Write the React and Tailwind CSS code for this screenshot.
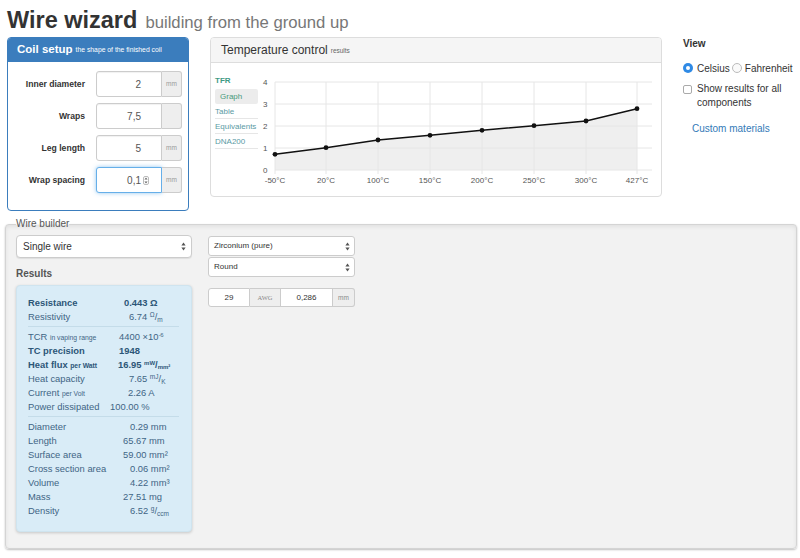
import React from "react"

const UpDown = ({ className = "" }) => (
  <svg width="5" height="9" viewBox="0 0 5 9" className={className}>
    <path d="M2.5 0.5 L4.6 3.4 L0.4 3.4 Z" fill="#555" />
    <path d="M2.5 8.5 L4.6 5.6 L0.4 5.6 Z" fill="#555" />
  </svg>
)

function CoilRow({ label, value, unit, focused }) {
  return (
    <div className="flex items-center h-[26px]">
      <div className="w-[77px] text-right text-[8.6px] font-bold text-[#333]">{label}</div>
      <div className="ml-[11px] flex h-full">
        {focused ? (
          <div className="w-[66px] h-full bg-white border border-[#66afe9] rounded-l-[3px] shadow-[0_0_4px_rgba(102,175,233,0.7)] flex items-center justify-end pr-[12px] text-[10px] text-[#555]">
            <span>{value}</span>
            <span className="ml-[2px] flex items-center justify-center w-[6px] h-[9px] border border-[#bbb] rounded-[2px]">
              <svg width="4" height="7" viewBox="0 0 4 7">
                <path d="M2 0.5 L3.6 2.6 L0.4 2.6 Z" fill="#666" />
                <path d="M2 6.5 L3.6 4.4 L0.4 4.4 Z" fill="#666" />
              </svg>
            </span>
          </div>
        ) : (
          <div className="w-[66px] h-full bg-white border border-[#ccc] rounded-l-[3px] shadow-[inset_0_1px_1px_rgba(0,0,0,0.06)] flex items-center justify-end pr-[20px] text-[10px] text-[#555]">
            {value}
          </div>
        )}
        <div className="w-[20px] h-full bg-[#eee] border border-l-0 border-[#ccc] rounded-r-[3px] flex items-center justify-center text-[6.5px] text-[#999]">
          {unit}
        </div>
      </div>
    </div>
  )
}

function ChartGraph() {
  const xs = [17, 68, 120, 172, 224, 276, 328, 379]
  const xLabels = ["-50°C", "20°C", "100°C", "150°C", "200°C", "250°C", "300°C", "427°C"]
  const ys = [19, 41, 63, 85, 107]
  const data = [91.3, 84.7, 77, 72.3, 67.3, 62.7, 58, 45.7]
  const pts = xs.map((x, i) => `${x},${data[i]}`).join(" ")
  return (
    <svg width="402" height="133" viewBox="0 0 402 133" className="block">
      <polygon points={`${pts} 379,107 17,107`} fill="#efefef" />
      {ys.map((y) => (
        <line key={y} x1="17" x2="394" y1={y} y2={y} stroke="#e6e6e6" strokeWidth="1" />
      ))}
      {xs.map((x) => (
        <line key={x} x1={x} x2={x} y1="19" y2="111" stroke="#e6e6e6" strokeWidth="1" />
      ))}
      {["4", "3", "2", "1", "0"].map((t, i) => (
        <text key={t} x="5" y={ys[i] + 3} fontSize="8" fill="#555" fontFamily="Liberation Sans, Arial, sans-serif">
          {t}
        </text>
      ))}
      {xLabels.map((t, i) => (
        <text key={t} x={xs[i]} y="120" fontSize="8" fill="#555" textAnchor="middle" fontFamily="Liberation Sans, Arial, sans-serif">
          {t}
        </text>
      ))}
      <polyline points={pts} fill="none" stroke="#111" strokeWidth="1.5" />
      {xs.map((x, i) => (
        <circle key={x} cx={x} cy={data[i]} r="2.4" fill="#111" />
      ))}
    </svg>
  )
}

const Row = ({ label, children, ml, bold }) => (
  <div className={`flex h-[14px] items-center ${bold ? "font-bold text-[#2c5677]" : "text-[#3f6585]"}`}>
    <div className="w-[82px] whitespace-nowrap">{label}</div>
    <div className={`${ml} whitespace-nowrap`}>{children}</div>
  </div>
)

const Sep = () => <div className="mt-[2px] mb-[3px] h-px bg-[#c4dce9] mr-[2px]" />

function Results() {
  return (
    <div className="w-[176px] h-[247px] mt-[5px] bg-[#d9ecf7] border border-[#cfe4ef] rounded-[4px] shadow-[0_1px_3px_rgba(0,0,0,0.18)] pt-[10px] pl-[11px] pr-[10px] text-[9.4px]">
      <Row label="Resistance" ml="ml-[14px]" bold>0.443 Ω</Row>
      <Row label="Resistivity" ml="ml-[19px]">
        6.74 <sup className="text-[6.5px]">Ω</sup>/<sub className="text-[6.5px]">m</sub>
      </Row>
      <Sep />
      <Row label={<span>TCR <span className="text-[6.8px]">in vaping range</span></span>} ml="ml-[9px]">
        4400 ×10<sup className="text-[6px]">-6</sup>
      </Row>
      <Row label="TC precision" ml="ml-[9px]" bold>1948</Row>
      <Row label={<span>Heat flux <span className="text-[6.8px]">per Watt</span></span>} ml="ml-[8px]" bold>
        16.95 <sup className="text-[6px]">mW</sup>/<sub className="text-[6px]">mm²</sub>
      </Row>
      <Row label="Heat capacity" ml="ml-[19px]">
        7.65 <sup className="text-[6.5px]">mJ</sup>/<sub className="text-[6.5px]">K</sub>
      </Row>
      <Row label={<span>Current <span className="text-[6.8px]">per Volt</span></span>} ml="ml-[18px]">2.26 A</Row>
      <Row label="Power dissipated" ml="ml-[0px]">100.00 %</Row>
      <Sep />
      <Row label="Diameter" ml="ml-[20px]">0.29 mm</Row>
      <Row label="Length" ml="ml-[13px]">65.67 mm</Row>
      <Row label="Surface area" ml="ml-[13px]">59.00 mm²</Row>
      <Row label="Cross section area" ml="ml-[20px]">0.06 mm²</Row>
      <Row label="Volume" ml="ml-[20px]">4.22 mm³</Row>
      <Row label="Mass" ml="ml-[13px]">27.51 mg</Row>
      <Row label="Density" ml="ml-[20px]">
        6.52 <sup className="text-[6.5px]">g</sup>/<sub className="text-[6.5px]">ccm</sub>
      </Row>
    </div>
  )
}

export default function App() {
  return (
    <div className="w-[800px] h-[558px] overflow-hidden bg-white font-['Liberation_Sans',Arial,sans-serif] text-[#333]">
      {/* TITLE */}
      <div className="pl-[7px] pt-[6px] h-[37px] flex items-baseline leading-[28px]">
        <span className="text-[23.5px] font-bold text-[#333]">Wire wizard</span>
        <span className="ml-[8px] text-[16.7px] text-[#777]">building from the ground up</span>
      </div>

      {/* TOP ROW */}
      <div className="flex pl-[7px] h-[187px]">
        {/* COIL SETUP */}
        <div className="w-[182px] h-[174px] border border-[#3b7dbd] rounded-[4px] overflow-hidden bg-white">
          <div className="h-[24px] bg-[#3b7dbd] flex items-center pl-[9px] text-white">
            <span className="text-[11.5px] font-bold">Coil setup</span>
            <span className="ml-[3px] text-[6.8px] mt-[1px]">the shape of the finished coil</span>
          </div>
          <div className="pt-[9px] flex flex-col gap-[6px]">
            <CoilRow label="Inner diameter" value="2" unit="mm" />
            <CoilRow label="Wraps" value="7,5" unit="" />
            <CoilRow label="Leg length" value="5" unit="mm" />
            <CoilRow label="Wrap spacing" value="0,1" unit="mm" focused />
          </div>
        </div>

        {/* TEMPERATURE CONTROL */}
        <div className="ml-[21px] w-[452px] h-[160px] border border-[#ddd] rounded-[4px] overflow-hidden bg-white">
          <div className="h-[25px] bg-[#f5f5f5] border-b border-[#ddd] flex items-center pl-[10px]">
            <span className="text-[12px] text-[#333]">Temperature control</span>
            <span className="ml-[3px] text-[6.5px] text-[#666] mt-[2px]">results</span>
          </div>
          <div className="flex">
            <div className="w-[47px] pl-[4px] pt-[12px] text-[8px]">
              <div className="h-[12px] leading-[12px] font-bold text-[#3f9a84]">TFR</div>
              <div className="mt-[2px] h-[15px] leading-[15px] bg-[#ececec] rounded-[2px] pl-[5px] text-[#4a9a7c]">Graph</div>
              <div className="h-[15px] leading-[15px] border-b border-[#e6e6e6] text-[#5a9aa4]">Table</div>
              <div className="h-[15px] leading-[15px] border-b border-[#e6e6e6] text-[#5a9aa4]">Equivalents</div>
              <div className="h-[15px] leading-[15px] border-b border-[#e6e6e6] text-[#5a9aa4]">DNA200</div>
            </div>
            <ChartGraph />
          </div>
        </div>

        {/* VIEW */}
        <div className="ml-[21px] text-[10px] text-[#333]">
          <div className="h-[14px] leading-[14px] font-bold">View</div>
          <div className="mt-[10px] h-[14px] flex items-center">
            <span className="w-[10px] h-[10px] rounded-full bg-[#2f8ae5] flex items-center justify-center">
              <span className="w-[4px] h-[4px] rounded-full bg-white" />
            </span>
            <span className="ml-[4px]">Celsius</span>
            <span className="ml-[2px] w-[10px] h-[10px] rounded-full border border-[#bbb] bg-[#fafafa]" />
            <span className="ml-[3px]">Fahrenheit</span>
          </div>
          <div className="mt-[7px] flex">
            <span className="mt-[3px] w-[9px] h-[9px] border border-[#aaa] rounded-[2px] bg-white shrink-0" />
            <div className="ml-[5px] leading-[14px]">
              Show results for all
              <br />
              components
            </div>
          </div>
          <div className="mt-[12px] pl-[9px] h-[14px] leading-[14px] text-[#337ab7]">Custom materials</div>
        </div>
      </div>

      {/* WIRE BUILDER */}
      <fieldset className="ml-[5px] w-[792px] mt-[-6px] bg-[#f2f2f2] border border-[#d4d4d4] rounded-[4px] shadow-[inset_0_2px_4px_rgba(0,0,0,0.07),0_1px_2px_rgba(0,0,0,0.25)] pl-[10px] pt-[5px] pb-[16px]">
        <legend className="text-[10px] leading-[12px] text-[#555]">Wire builder</legend>
        <div className="flex">
          <div className="w-[176px]">
            <div className="h-[23px] bg-white border border-[#ccc] rounded-[4px] shadow-[0_1px_1px_rgba(0,0,0,0.08)] flex items-center justify-between pl-[6px] pr-[5px] text-[10px] text-[#333]">
              <span>Single wire</span>
              <UpDown />
            </div>
            <div className="mt-[10px] h-[12px] leading-[12px] text-[10px] font-bold text-[#555]">Results</div>
            <Results />
          </div>

          <div className="ml-[16px] w-[147px] pt-[1px]">
            <div className="h-[20px] bg-white border border-[#ccc] rounded-[3px] flex items-center justify-between pl-[5px] pr-[4px] text-[8px] text-[#333]">
              <span>Zirconium (pure)</span>
              <UpDown />
            </div>
            <div className="mt-[1px] h-[20px] bg-white border border-[#ccc] rounded-[3px] flex items-center justify-between pl-[5px] pr-[4px] text-[8px] text-[#333]">
              <span>Round</span>
              <UpDown />
            </div>
            <div className="mt-[11px] h-[19px] flex text-[8px] text-[#333]">
              <div className="w-[42px] bg-white border border-[#ccc] rounded-l-[3px] flex items-center justify-center">29</div>
              <div className="w-[30px] bg-[#eee] border-y border-[#ccc] flex items-center justify-center font-['Liberation_Serif',serif] text-[6.5px] text-[#888]">AWG</div>
              <div className="w-[53px] bg-white border border-[#ccc] flex items-center justify-center">0,286</div>
              <div className="w-[22px] bg-[#eee] border border-l-0 border-[#ccc] rounded-r-[3px] flex items-center justify-center text-[6.5px] text-[#888]">mm</div>
            </div>
          </div>
        </div>
      </fieldset>
    </div>
  )
}
